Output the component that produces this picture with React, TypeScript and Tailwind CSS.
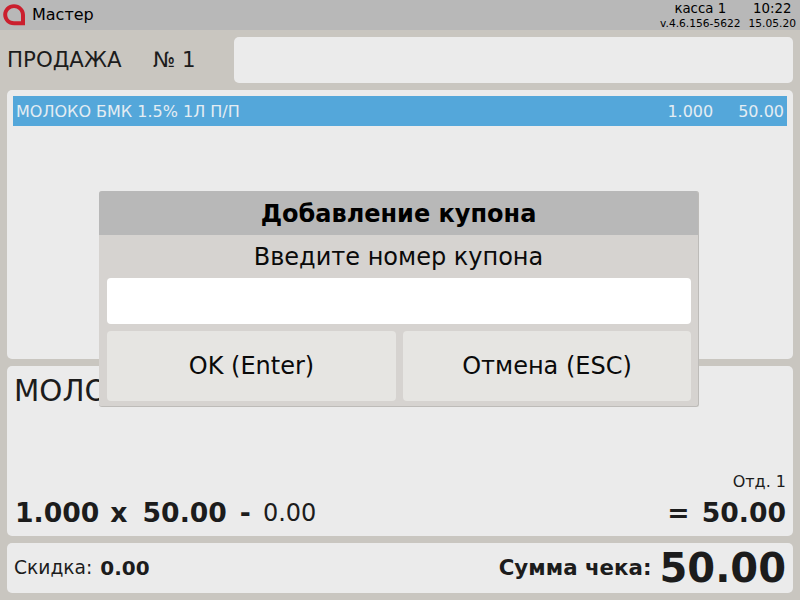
const font = { fontFamily: '"DejaVu Sans", sans-serif' };

function Logo() {
  return (
    <svg viewBox="0 0 22 22" className="w-[22px] h-[22px]">
      <path
        fillRule="evenodd"
        fill="#cb1f2e"
        d="M11 0.2 C17 0.2 22 5 22 11 L22 21.2 L11 21.2 C5 21.2 0.2 16.5 0.2 10.7 C0.2 5 5 0.2 11 0.2 Z M11 4 C7.2 4 4.2 7 4.2 10.7 C4.2 14.4 7.2 17.2 11 17.2 L18 17.2 L18 11 C18 7 14.8 4 11 4 Z"
      />
    </svg>
  );
}

function CouponDialog() {
  return (
    <div className="absolute left-[99px] top-[191px] w-[600px] h-[216px] rounded-[3px] bg-[#d6d3d0] border-b border-r border-[#bdbbb8] overflow-hidden">
      <div className="h-[44px] pt-[1px] bg-[#b8b8b8] flex items-center justify-center text-[24px] font-bold text-black">
        Добавление купона
      </div>
      <div className="h-[43px] flex items-center justify-center text-[24px] text-[#0a0a0a]">
        Введите номер купона
      </div>
      <div className="ml-[8px] mr-[7px] h-[46px] bg-white rounded-[4px]" />
      <div className="ml-[8px] mr-[7px] mt-[7px] flex gap-[7px]">
        <div className="w-[289px] h-[70px] bg-[#e6e5e2] rounded-[4px] flex items-center justify-center text-[24px] text-[#0a0a0a]">
          OK (Enter)
        </div>
        <div className="flex-1 h-[70px] bg-[#e6e5e2] rounded-[4px] flex items-center justify-center text-[24px] text-[#0a0a0a]">
          Отмена (ESC)
        </div>
      </div>
    </div>
  );
}

export default function App() {
  return (
    <div className="relative w-[800px] h-[600px] overflow-hidden bg-[#c9c6c0] text-[#1c1c1c]" style={font}>
      {/* Top bar */}
      <header className="h-[30px] bg-[#b8b8b8] flex items-center justify-between pl-[3px] pr-[4px] text-black">
        <div className="flex items-center gap-[7px]">
          <Logo />
          <span className="text-[16px]">Мастер</span>
        </div>
        <div className="flex gap-[8px] text-right">
          <div className="flex flex-col items-center">
            <span className="text-[13.33px] leading-[16px]">касса 1</span>
            <span className="text-[10.67px] leading-[13px]">v.4.6.156-5622</span>
          </div>
          <div className="flex flex-col items-center">
            <span className="text-[13.33px] leading-[16px]">10:22</span>
            <span className="text-[10.67px] leading-[13px]">15.05.20</span>
          </div>
        </div>
      </header>

      {/* Sale title */}
      <div className="mt-[7px] h-[46px] pl-[7px] pr-[7px] flex items-center">
        <span className="w-[146px] text-[21.33px]">ПРОДАЖА</span>
        <span className="w-[81px] text-[21.33px]">№ 1</span>
        <div className="flex-1 h-full bg-[#ebebeb] rounded-[5px]" />
      </div>

      {/* Receipt lines */}
      <div className="mx-[7px] mt-[7px] h-[269px] bg-[#ebebeb] rounded-[5px] px-[6px] pt-[6px]">
        <div className="h-[30px] pt-[1px] bg-[#54a7da] text-[#e4edf3] text-[16px] flex items-center pl-[3px] pr-[3px]">
          <span className="flex-1">МОЛОКО БМК 1.5% 1Л П/П</span>
          <span className="mr-[25px]">1.000</span>
          <span>50.00</span>
        </div>
      </div>

      {/* Current item */}
      <div className="mx-[7px] mt-[7px] h-[170px] bg-[#ebebeb] rounded-[5px] px-[7px] flex flex-col">
        <div className="mt-[5px] h-[40px] text-[29.33px] leading-[40px] whitespace-nowrap overflow-hidden">МОЛОКО БМК 1.5% 1Л П/П</div>
        <div className="mt-auto text-right text-[16px] leading-[18px] mb-[3px]">Отд. 1</div>
        <div className="flex items-center justify-between h-[38px] mb-[4px]">
          <div className="flex items-center pl-[1px]">
            <span className="text-[26.67px] font-bold">1.000</span>
            <span className="text-[26.67px] font-bold ml-[11px]">x</span>
            <span className="text-[26.67px] font-bold ml-[15px]">50.00</span>
            <span className="text-[26.67px] font-bold ml-[13px]">-</span>
            <span className="text-[24px] ml-[12px]">0.00</span>
          </div>
          <div className="flex items-center">
            <span className="text-[26.67px] font-bold mr-[12px]">=</span>
            <span className="text-[26.67px] font-bold">50.00</span>
          </div>
        </div>
      </div>

      {/* Totals */}
      <div className="mx-[7px] mt-[7px] h-[50px] bg-[#ebebeb] rounded-[5px] px-[7px] flex items-center justify-between">
        <div className="flex items-center">
          <span className="text-[18.67px]">Скидка:</span>
          <span className="text-[20px] font-bold ml-[8px]">0.00</span>
        </div>
        <div className="flex items-center">
          <span className="text-[21.33px] font-bold mr-[8px]">Сумма чека:</span>
          <span className="text-[40px] font-bold leading-[50px]">50.00</span>
        </div>
      </div>

      <CouponDialog />
    </div>
  );
}
